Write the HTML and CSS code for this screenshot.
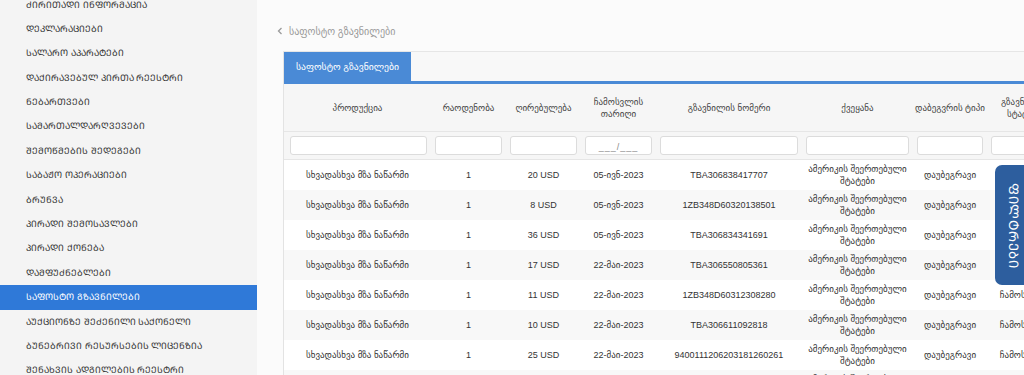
FILE: index.html
```html
<!DOCTYPE html>
<html lang="ka">
<head>
<meta charset="utf-8">
<title>საფოსტო გზავნილები</title>
<link rel="stylesheet" href="styles.css">
</head>
<body>
<div class="app">
  <aside class="sidebar">
    <ul class="menu">
      <li>ᲫᲘᲠᲘᲗᲐᲓᲘ ᲘᲜᲤᲝᲠᲛᲐᲪᲘᲐ</li>
      <li>ᲓᲔᲙᲚᲐᲠᲐᲪᲘᲔᲑᲘ</li>
      <li>ᲡᲐᲚᲐᲠᲝ ᲐᲞᲐᲠᲐᲢᲔᲑᲘ</li>
      <li>ᲓᲐᲥᲘᲠᲐᲕᲔᲑᲣᲚ ᲞᲘᲠᲗᲐ ᲠᲔᲔᲡᲢᲠᲘ</li>
      <li>ᲜᲔᲑᲐᲠᲗᲕᲔᲑᲘ</li>
      <li>ᲡᲐᲛᲐᲠᲗᲐᲚᲓᲐᲠᲦᲕᲔᲕᲔᲑᲘ</li>
      <li>ᲨᲔᲛᲝᲬᲛᲔᲑᲘᲡ ᲨᲔᲓᲔᲒᲔᲑᲘ</li>
      <li>ᲡᲐᲑᲐᲟᲝ ᲝᲞᲔᲠᲐᲪᲘᲔᲑᲘ</li>
      <li>ᲑᲠᲣᲜᲕᲐ</li>
      <li>ᲞᲘᲠᲐᲓᲘ ᲨᲔᲛᲝᲡᲐᲕᲚᲔᲑᲘ</li>
      <li>ᲞᲘᲠᲐᲓᲘ ᲥᲝᲜᲔᲑᲐ</li>
      <li>ᲓᲐᲛᲤᲣᲫᲜᲔᲑᲚᲔᲑᲘ</li>
      <li class="active">ᲡᲐᲤᲝᲡᲢᲝ ᲒᲖᲐᲕᲜᲘᲚᲔᲑᲘ</li>
      <li>ᲐᲣᲥᲪᲘᲝᲜᲖᲔ ᲨᲔᲫᲔᲜᲘᲚᲘ ᲡᲐᲥᲝᲜᲔᲚᲘ</li>
      <li>ᲑᲣᲜᲔᲑᲠᲘᲕᲘ ᲠᲔᲡᲣᲠᲡᲔᲑᲘᲡ ᲚᲘᲪᲔᲜᲖᲘᲐ</li>
      <li>ᲨᲔᲜᲐᲮᲕᲘᲡ ᲐᲓᲒᲘᲚᲔᲑᲘᲡ ᲠᲔᲔᲡᲢᲠᲘ</li>
    </ul>
  </aside>
  <main class="main">
    <div class="crumb">
      <svg class="chev" width="6" height="8" viewBox="0 0 6 8"><path d="M4.5 1 L1.5 4 L4.5 7" fill="none" stroke="#9a9a9a" stroke-width="1.3"/></svg>
      <span>საფოსტო გზავნილები</span>
    </div>
    <div class="card">
      <div class="tabs"><div class="tab">საფოსტო გზავნილები</div></div>
      <table class="grid">
        <colgroup>
          <col class="c1"><col class="c2"><col class="c3"><col class="c4"><col class="c5"><col class="c6"><col class="c7"><col class="c8">
        </colgroup>
        <thead>
          <tr class="head">
            <th>პროდუქცია</th>
            <th>რაოდენობა</th>
            <th>ღირებულება</th>
            <th>ჩამოსვლის თარიღი</th>
            <th>გზავნილის ნომერი</th>
            <th>ქვეყანა</th>
            <th>დაბეგვრის ტიპი</th>
            <th>გზავნილის სტატუსი</th>
          </tr>
          <tr class="filters">
            <td><div class="field"></div></td>
            <td><div class="field"></div></td>
            <td><div class="field"></div></td>
            <td><div class="field mask">___/___</div></td>
            <td><div class="field"></div></td>
            <td><div class="field"></div></td>
            <td><div class="field"></div></td>
            <td><div class="field"></div></td>
          </tr>
        </thead>
        <tbody>
          <tr><td>სხვადასხვა მზა ნაწარმი</td><td>1</td><td>20 USD</td><td>05-ივნ-2023</td><td>TBA306838417707</td><td>ამერიკის შეერთებული შტატები</td><td>დაუბეგრავი</td><td>ჩამოსულია</td></tr>
          <tr><td>სხვადასხვა მზა ნაწარმი</td><td>1</td><td>8 USD</td><td>05-ივნ-2023</td><td>1ZB348D60320138501</td><td>ამერიკის შეერთებული შტატები</td><td>დაუბეგრავი</td><td>ჩამოსულია</td></tr>
          <tr><td>სხვადასხვა მზა ნაწარმი</td><td>1</td><td>36 USD</td><td>05-ივნ-2023</td><td>TBA306834341691</td><td>ამერიკის შეერთებული შტატები</td><td>დაუბეგრავი</td><td>ჩამოსულია</td></tr>
          <tr><td>სხვადასხვა მზა ნაწარმი</td><td>1</td><td>17 USD</td><td>22-მაი-2023</td><td>TBA306550805361</td><td>ამერიკის შეერთებული შტატები</td><td>დაუბეგრავი</td><td>ჩამოსულია</td></tr>
          <tr><td>სხვადასხვა მზა ნაწარმი</td><td>1</td><td>11 USD</td><td>22-მაი-2023</td><td>1ZB348D60312308280</td><td>ამერიკის შეერთებული შტატები</td><td>დაუბეგრავი</td><td>ჩამოსულია</td></tr>
          <tr><td>სხვადასხვა მზა ნაწარმი</td><td>1</td><td>10 USD</td><td>22-მაი-2023</td><td>TBA306611092818</td><td>ამერიკის შეერთებული შტატები</td><td>დაუბეგრავი</td><td>ჩამოსულია</td></tr>
          <tr><td>სხვადასხვა მზა ნაწარმი</td><td>1</td><td>25 USD</td><td>22-მაი-2023</td><td>9400111206203181260261</td><td>ამერიკის შეერთებული შტატები</td><td>დაუბეგრავი</td><td>ჩამოსულია</td></tr>
          <tr><td>სხვადასხვა მზა ნაწარმი</td><td>1</td><td>14 USD</td><td>22-მაი-2023</td><td>TBA306611092801</td><td>ამერიკის შეერთებული შტატები</td><td>დაუბეგრავი</td><td>ჩამოსულია</td></tr>
        </tbody>
      </table>
    </div>
  </main>
  <button class="filter-toggle" type="button">ᲤᲘᲚᲢᲠᲔᲑᲘ</button>
</div>
</body>
</html>
```
FILE: styles.css
```css
html, body {
  margin: 0;
  height: 100%;
  overflow: hidden;
}
body {
  font-family: "Liberation Sans", "DejaVu Sans", sans-serif;
  color: #333;
}
.app {
  display: flex;
  height: 375px;
  position: relative;
  overflow: hidden;
}
.sidebar {
  width: 257px;
  flex: none;
  background: #f4f4f4;
  overflow: hidden;
}
.menu {
  list-style: none;
  margin: -7.5px 0 0;
  padding: 0;
}
.menu li {
  height: 24.4px;
  line-height: 24.4px;
  padding-left: 26px;
  font-size: 9px;
  color: #333;
  white-space: nowrap;
}
.menu li.active {
  background: #2f79d8;
  color: #fff;
}
.main {
  flex: 1;
  min-width: 0;
  background: #fbfbfb;
  padding: 22px 0 0 20px;
}
.crumb {
  display: flex;
  align-items: center;
  gap: 6px;
  height: 18px;
  font-size: 10px;
  color: #999;
}
.card {
  margin: 11px 0 0 6px;
  width: 800px;
  background: #fff;
  border-left: 1px solid #e3e3e3;
  border-top: 1px solid #e6e6e6;
}
.tabs {
  display: flex;
  height: 29px;
  background: #f8f8f8;
  border-bottom: 3px solid #4a8ad6;
}
.tab {
  display: flex;
  align-items: center;
  padding: 0 12px;
  width: 103px;
  background: #4a8ad6;
  color: #fff;
  font-size: 9.7px;
  white-space: nowrap;
}
.grid {
  border-collapse: collapse;
  table-layout: fixed;
  width: 778px;
  font-size: 9px;
}
.c1 { width: 147px; }
.c2 { width: 75px; }
.c3 { width: 75px; }
.c4 { width: 75px; }
.c5 { width: 146px; }
.c6 { width: 111px; }
.c7 { width: 74px; }
.c8 { width: 75px; }
.grid th {
  height: 47px;
  padding: 0 1px;
  font-weight: normal;
  color: #444;
  background: #f6f6f6;
  border-bottom: 1px solid #e6e6e6;
  text-align: center;
  line-height: 12px;
}
.filters td {
  height: 27px;
  padding: 0 4px;
  background: #f6f6f6;
  border-bottom: 1px solid #e6e6e6;
}
.filters td:first-child { padding-left: 6px; }
.field {
  height: 17px;
  background: #fff;
  border: 1px solid #dcdcdc;
  border-radius: 3px;
  font-size: 9px;
  color: #888;
  text-align: center;
  line-height: 20px;
  letter-spacing: 1px;
}
.grid tbody td {
  height: 30px;
  padding: 0 2px;
  text-align: center;
  line-height: 12px;
  color: #333;
  white-space: normal;
}
.grid tbody td:last-child { white-space: nowrap; }
.grid tbody tr:nth-child(even) td {
  background: #f8f8f8;
}
.filter-toggle {
  position: absolute;
  right: -6px;
  top: 165px;
  width: 35px;
  height: 120px;
  padding: 0;
  border: none;
  border-radius: 7px;
  background: #2d5e9e;
  color: #fff;
  font-family: "DejaVu Sans", sans-serif;
  font-size: 13px;
  writing-mode: vertical-rl;
  letter-spacing: 0.5px;
}
```
